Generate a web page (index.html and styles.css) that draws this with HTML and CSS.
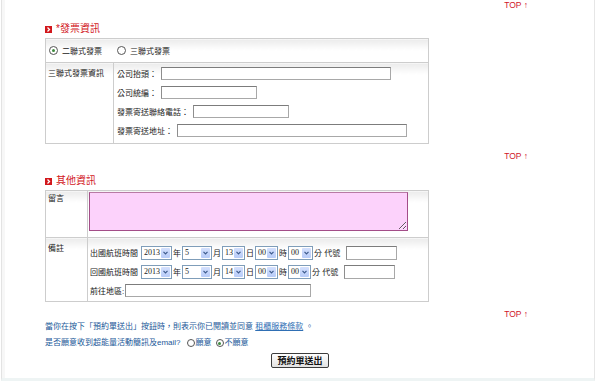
FILE: index.html
```html
<!DOCTYPE html>
<html lang="zh-Hant">
<head>
    <meta charset="UTF-8">
    <meta name="viewport" content="width=device-width, initial-scale=1.0">
    <title>預約單</title>
    <link rel="stylesheet" href="styles.css">
</head>
<body>
<div class="frame">
    <div class="page">
        <div class="top-row"><a href="#" class="top-link">TOP ↑</a></div>

        <h2 class="sec-title">
            <span class="sec-icon"><svg width="7" height="7" viewBox="0 0 7 7"><path d="M2.5 1.5 L4.5 3.5 L2.5 5.5" stroke="#fff" stroke-width="1.3" fill="none"/></svg></span>
            *發票資訊
        </h2>
        <table class="form-table">
            <tr>
                <td colspan="2">
                    <div class="radio-row">
                        <label class="radio-opt"><span class="radio checked"></span>二聯式發票</label>
                        <label class="radio-opt"><span class="radio"></span>三聯式發票</label>
                    </div>
                </td>
            </tr>
            <tr>
                <td class="label-cell wide">三聯式發票資訊</td>
                <td class="field-cell">
                    <div class="field"><span>公司抬頭：</span><input type="text" class="txt w230"></div>
                    <div class="field"><span>公司統編：</span><input type="text" class="txt w96"></div>
                    <div class="field"><span>發票寄送聯絡電話：</span><input type="text" class="txt w96"></div>
                    <div class="field"><span>發票寄送地址：</span><input type="text" class="txt w230"></div>
                </td>
            </tr>
        </table>

        <div class="top-row gap"><a href="#" class="top-link">TOP ↑</a></div>

        <h2 class="sec-title second">
            <span class="sec-icon"><svg width="7" height="7" viewBox="0 0 7 7"><path d="M2.5 1.5 L4.5 3.5 L2.5 5.5" stroke="#fff" stroke-width="1.3" fill="none"/></svg></span>
            其他資訊
        </h2>
        <table class="form-table">
            <tr>
                <td class="label-cell narrow msg-label">留言</td>
                <td class="msg-cell"><textarea class="msg"></textarea></td>
            </tr>
            <tr>
                <td class="label-cell narrow note-label">備註</td>
                <td class="time-cell">
                    <div class="time-row">
                        <span>出國航班時間</span>
                        <span class="sel w31 first"><span class="sel-val">2013</span><span class="sel-btn"><svg width="5" height="4" viewBox="0 0 5 4"><path d="M0.5 0.8 L2.5 2.8 L4.5 0.8" stroke="#3d5a8c" stroke-width="1.2" fill="none"/></svg></span></span>
                        <span class="unit">年</span>
                        <span class="sel w30"><span class="sel-val">5</span><span class="sel-btn"><svg width="5" height="4" viewBox="0 0 5 4"><path d="M0.5 0.8 L2.5 2.8 L4.5 0.8" stroke="#3d5a8c" stroke-width="1.2" fill="none"/></svg></span></span>
                        <span class="unit">月</span>
                        <span class="sel w23"><span class="sel-val">13</span><span class="sel-btn"><svg width="5" height="4" viewBox="0 0 5 4"><path d="M0.5 0.8 L2.5 2.8 L4.5 0.8" stroke="#3d5a8c" stroke-width="1.2" fill="none"/></svg></span></span>
                        <span class="unit">日</span>
                        <span class="sel w23"><span class="sel-val">00</span><span class="sel-btn"><svg width="5" height="4" viewBox="0 0 5 4"><path d="M0.5 0.8 L2.5 2.8 L4.5 0.8" stroke="#3d5a8c" stroke-width="1.2" fill="none"/></svg></span></span>
                        <span class="unit">時</span>
                        <span class="sel w25"><span class="sel-val">00</span><span class="sel-btn"><svg width="5" height="4" viewBox="0 0 5 4"><path d="M0.5 0.8 L2.5 2.8 L4.5 0.8" stroke="#3d5a8c" stroke-width="1.2" fill="none"/></svg></span></span>
                        <span class="unit">分 代號</span>
                        <input type="text" class="txt w51">
                    </div>
                    <div class="time-row">
                        <span>回國航班時間</span>
                        <span class="sel w31 first"><span class="sel-val">2013</span><span class="sel-btn"><svg width="5" height="4" viewBox="0 0 5 4"><path d="M0.5 0.8 L2.5 2.8 L4.5 0.8" stroke="#3d5a8c" stroke-width="1.2" fill="none"/></svg></span></span>
                        <span class="unit">年</span>
                        <span class="sel w30"><span class="sel-val">5</span><span class="sel-btn"><svg width="5" height="4" viewBox="0 0 5 4"><path d="M0.5 0.8 L2.5 2.8 L4.5 0.8" stroke="#3d5a8c" stroke-width="1.2" fill="none"/></svg></span></span>
                        <span class="unit">月</span>
                        <span class="sel w23"><span class="sel-val">14</span><span class="sel-btn"><svg width="5" height="4" viewBox="0 0 5 4"><path d="M0.5 0.8 L2.5 2.8 L4.5 0.8" stroke="#3d5a8c" stroke-width="1.2" fill="none"/></svg></span></span>
                        <span class="unit">日</span>
                        <span class="sel w23"><span class="sel-val">00</span><span class="sel-btn"><svg width="5" height="4" viewBox="0 0 5 4"><path d="M0.5 0.8 L2.5 2.8 L4.5 0.8" stroke="#3d5a8c" stroke-width="1.2" fill="none"/></svg></span></span>
                        <span class="unit">時</span>
                        <span class="sel w23"><span class="sel-val">00</span><span class="sel-btn"><svg width="5" height="4" viewBox="0 0 5 4"><path d="M0.5 0.8 L2.5 2.8 L4.5 0.8" stroke="#3d5a8c" stroke-width="1.2" fill="none"/></svg></span></span>
                        <span class="unit">分 代號</span>
                        <input type="text" class="txt w51">
                    </div>
                    <div class="time-row">
                        <span>前往地區:</span>
                        <input type="text" class="txt w186">
                    </div>
                </td>
            </tr>
        </table>

        <div class="top-row gap"><a href="#" class="top-link">TOP ↑</a></div>

        <p class="note">當你在按下「預約單送出」按鈕時，則表示你已閱讀並同意 <a href="#" class="terms">租櫃服務條款</a> 。</p>
        <p class="note choice">
            是否願意收到超能量活動簡訊及email?
            <label class="radio-opt small"><span class="radio"></span>願意</label>
            <label class="radio-opt small"><span class="radio checked"></span>不願意</label>
        </p>
        <div class="submit-row">
            <button type="submit" class="submit-btn">預約單送出</button>
        </div>
    </div>
</div>
</body>
</html>
```

FILE: styles.css
```css
body {
    margin: 0;
    background: #FFF;
    font-family: "Liberation Sans", "Noto Sans CJK TC", sans-serif;
}

.frame {
    margin-left: 1px;
    width: 592px;
    height: 378px;
    border-left: 1px solid #e3e3e3;
    border-right: 1px solid #e6e6e6;
    border-bottom: 3px solid #eef4f4;
    box-shadow: inset 3px 0 0 #f7f7f7;
}

.page {
    padding-left: 43px;
    width: 510px;
}

.top-row {
    height: 10px;
    line-height: 10px;
    text-align: right;
    padding-right: 27px;
    font-size: 8.5px;
}

.top-row.gap {
    margin-top: 7px;
}

.top-link {
    color: #d0142a;
    text-decoration: none;
}

.sec-title {
    margin: 12px 0 2px;
    height: 14px;
    line-height: 14px;
    font-size: 10px;
    font-weight: normal;
    color: #d2171c;
    display: flex;
    align-items: center;
    gap: 4px;
}

.sec-title.second {
    margin-top: 13px;
}

.sec-icon {
    width: 7px;
    height: 7px;
    background: #d2171c;
    display: flex;
}

.form-table {
    border-collapse: collapse;
    width: 384px;
}

.form-table td {
    border: 1px solid #cdcdcd;
    padding: 0;
    vertical-align: top;
    background: linear-gradient(#ebebeb, #fff 11px);
    font-size: 8px;
    color: #222;
}

.radio-row {
    height: 23px;
    display: flex;
    align-items: center;
    padding-left: 3px;
}

.radio-opt {
    display: inline-flex;
    align-items: center;
    margin-right: 15px;
}

.radio {
    width: 9px;
    height: 9px;
    box-sizing: border-box;
    border: 1px solid #555;
    border-radius: 50%;
    background: #fff;
    margin-right: 4px;
    display: inline-flex;
    align-items: center;
    justify-content: center;
}

.radio.checked::after {
    content: "";
    width: 3px;
    height: 3px;
    border-radius: 50%;
    background: #3d8a3d;
}

.label-cell {
    padding-left: 2px !important;
}

.label-cell.wide {
    width: 65px;
    line-height: 19px;
    padding-top: 1px !important;
}

.label-cell.narrow {
    width: 39px;
    line-height: 14px;
}

.msg-label {
    padding-top: 1px !important;
}

.note-label {
    padding-top: 4px !important;
}

.field-cell {
    padding: 1px 0 3px 3px !important;
}

.field {
    height: 19px;
    display: flex;
    align-items: center;
}

.txt {
    box-sizing: border-box;
    height: 13px;
    margin: 0 0 0 4px;
    padding: 0;
    border: 1px solid #a8a8a8;
    border-top-color: #7c7c7c;
    border-left-color: #8e8e8e;
    background: #fff;
}

.w230 { width: 230px; }
.w96 { width: 96px; }
.w51 { width: 51px; height: 14px; margin-left: 5px; }
.w186 { width: 186px; margin-left: 1px; }

.msg-cell {
    padding: 1px 0 6px 1px !important;
}

.msg {
    display: block;
    box-sizing: border-box;
    width: 319px;
    height: 39px;
    margin: 0;
    border: 1px solid #a34d88;
    border-top-color: #b87aa5;
    background: #fcd2fb;
    resize: both;
}

.time-cell {
    padding: 5px 0 1px 2px !important;
}

.time-row {
    height: 19px;
    display: flex;
    align-items: center;
    white-space: nowrap;
}

.sel {
    display: inline-flex;
    box-sizing: border-box;
    height: 14px;
    border: 1px solid #7f9db9;
    background: #fff;
    padding: 1px;
}

.sel.first {
    margin-left: 3px;
}

.w31 { width: 31px; }
.w30 { width: 30px; }
.w25 { width: 25px; }
.w23 { width: 23px; }

.sel-val {
    flex: 1;
    padding-left: 1px;
    line-height: 10px;
    font-size: 8px;
    color: #222;
    font-family: "Liberation Serif", serif;
}

.sel-btn {
    width: 9px;
    background: linear-gradient(#d4e0fd, #b7cbf8);
    border-radius: 1px;
    display: flex;
    align-items: center;
    justify-content: center;
}

.unit {
    margin: 0 1px;
}

.note {
    margin: 0;
    font-size: 8px;
    line-height: 16px;
    color: #1a5898;
}

.note.choice {
    display: flex;
    align-items: center;
    white-space: nowrap;
}

.terms {
    color: #2f6fb4;
}

.radio-opt.small {
    margin-right: 4px;
}

.note.choice .radio-opt:first-of-type {
    margin-left: 6px;
}

.note.choice .radio {
    width: 8px;
    height: 8px;
    margin-right: 1px;
}

.submit-row {
    display: flex;
    justify-content: center;
    margin-top: 2px;
}

.submit-btn {
    width: 58px;
    height: 15px;
    padding: 0;
    border: 1px solid #3c3c3c;
    border-radius: 2px;
    background: linear-gradient(#fff, #e2e2e2);
    font-family: "Noto Sans CJK TC", sans-serif;
    font-size: 9px;
    font-weight: bold;
    line-height: 13px;
    color: #111;
    cursor: pointer;
}
```
